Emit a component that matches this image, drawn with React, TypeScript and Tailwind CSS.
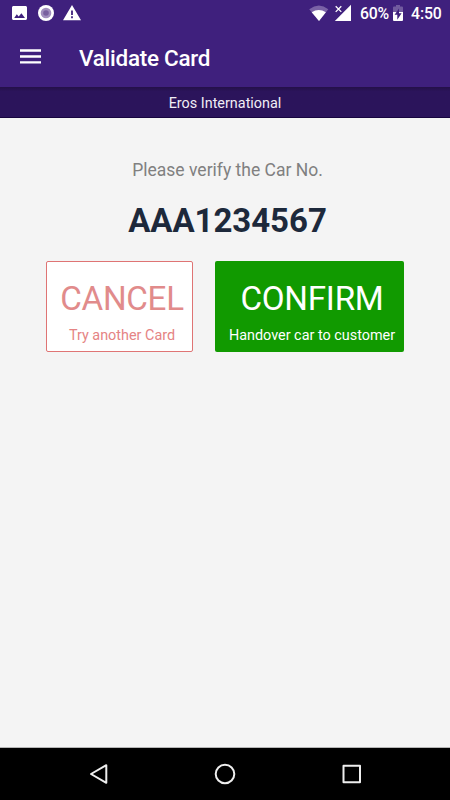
import React from "react";

function StatusBar() {
  return (
    <div className="flex h-7 items-start justify-between">
      <svg width="100" height="28" viewBox="0 0 100 28">
        <path fill="#fff" fillRule="evenodd" d="M13.500 6h12c.8 0 1.500.7 1.500 1.500v11c0 .8-.7 1.500-1.500 1.500h-12c-.8 0-1.500-.7-1.500-1.500v-11c0-.8.7-1.500 1.500-1.500zM14.200 18h10.800l-3.600-4.800-2.700 3.300-1.900-2.200z" />
        <circle cx="46" cy="13" r="8" fill="#fff" />
        <circle cx="46" cy="13" r="5.300" fill="#a28fbe" />
        <circle cx="46" cy="13" r="2.800" fill="#79609f" />
        <path fill="#fff" fillRule="evenodd" d="M72 5l9 15.300H63zM71.100 10.500v4.500h1.800v-4.500zM71.100 16.300v1.900h1.800v-1.900z" />
      </svg>
      <div className="flex">
        <svg width="54" height="28" viewBox="306 0 54 28">
          <path fill="#7a62a6" d="M309.200 9.200Q319 2 328.300 9.200L319 21z" />
          <path fill="#fff" d="M311.700 12.200q7-4.600 14.200 0L319 21z" />
          <path fill="#fff" d="M351 4.800V21H334.800z" />
          <path stroke="#fff" strokeWidth="1.300" d="M335.700 6.300l5.600 5.600M341.300 6.300l-5.600 5.600" />
        </svg>
        <span className="mt-1 w-8 text-[15.800px] leading-5 font-medium tracking-[-0.2px] whitespace-nowrap">60%</span>
        <svg width="19" height="28" viewBox="392 0 19 28">
          <path fill="#725b9f" d="M393 7.500q0-1 1-1h2V5h4v1.500h2q1 0 1 1V13h-10z" />
          <path fill="#fff" d="M393 12h10v8q0 1-1 1h-8q-1 0-1-1z" />
          <path fill="#3f207d" d="M399 8.500v4.700h2.600l-4.300 6.500v-4.900h-2.700z" />
        </svg>
        <span className="mt-1 w-[39px] text-[15.800px] leading-5 font-medium tracking-[-0.1px] whitespace-nowrap">4:50</span>
      </div>
    </div>
  );
}

export default function App() {
  return (
    <div className="flex h-[800px] w-[450px] flex-col overflow-hidden bg-[#f4f4f4] font-['Roboto',sans-serif]">
      <header className="h-[87px] shrink-0 bg-[#3f207d] text-white">
        <StatusBar />
        <div className="flex h-[59px] items-center pl-5">
          <button aria-label="Menu" className="mb-0.5 w-[59px]">
            <svg width="21" height="17" viewBox="0 0 21 17" stroke="#fff" strokeWidth="2.400">
              <path d="M0 2.500h21M0 8.500h21M0 14.400h21" />
            </svg>
          </button>
          <h1 className="text-[22.500px] leading-[26px] font-medium tracking-[-0.28px] whitespace-nowrap">Validate Card</h1>
        </div>
      </header>
      <div className="flex h-[31px] shrink-0 items-center justify-center border-b border-[#17053f] bg-[#2b145b] bg-linear-to-b from-[#241049] to-[#2b145b] to-15% pt-1 text-[14.400px] text-[#f1edf5]">
        Eros International
      </div>
      <main className="flex flex-1 flex-col items-center">
        <p className="mt-10 ml-[5px] text-[17.500px] leading-6 whitespace-nowrap text-[#808080]">Please verify the Car No.</p>
        <p className="mt-[19px] ml-[5px] text-[33px] leading-10 font-bold tracking-[-0.05px] whitespace-nowrap text-[#1d293b]">AAA1234567</p>
        <div className="mt-5 flex gap-[22px] self-start pl-[46px]">
          <button className="flex h-[91px] w-[147px] flex-col items-center rounded-xs border border-[#df7474] bg-white pl-[5px] text-[#e18b8b]">
            <span className="mt-[17px] text-[33.200px] leading-10 tracking-[-0.3px] whitespace-nowrap">CANCEL</span>
            <span className="mt-[7px] text-[14.400px] leading-5 whitespace-nowrap text-[#e58484]">Try another Card</span>
          </button>
          <button className="flex h-[91px] w-[189px] flex-col items-center rounded-xs bg-[#119a00] pl-[5px] text-white">
            <span className="mt-[18px] text-[33.200px] leading-10 tracking-[-0.25px] whitespace-nowrap">CONFIRM</span>
            <span className="mt-[7px] text-[14.400px] leading-5 whitespace-nowrap">Handover car to customer</span>
          </button>
        </div>
      </main>
      <nav className="flex h-[53px] shrink-0 border-t border-[#b5b5b5] bg-black">
        <svg width="450" height="52" viewBox="0 748 450 52" fill="none" stroke="#eee" strokeWidth="2" strokeLinejoin="round">
          <path d="M106.300 765.200v17.600L91 774z" />
          <circle cx="225" cy="774" r="9.300" />
          <rect x="343.500" y="765.800" width="16.500" height="16.500" />
        </svg>
      </nav>
    </div>
  );
}
